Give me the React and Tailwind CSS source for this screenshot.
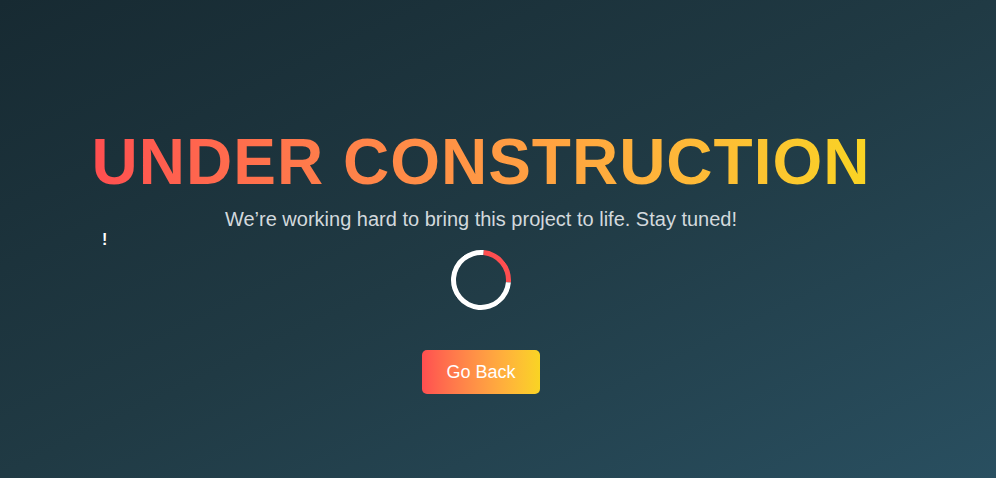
export default function App() {
  return (
    <div
      className="h-[478px] w-full overflow-hidden bg-gradient-to-br from-[#172a32] via-[#203a44] to-[#294f60]"
      style={{ fontFamily: '"Liberation Sans", Arial, sans-serif' }}
    >
      <div className="flex w-[962px] flex-col items-center pt-[130px]">
        {/* Title */}
        <h1 className="bg-gradient-to-r from-[#ff4e50] to-[#f9d423] bg-clip-text text-[64px] font-bold leading-none tracking-[1px] text-transparent">
          UNDER CONSTRUCTION
        </h1>

        {/* Subtitle */}
        <p className="mt-[13px] text-[20px] leading-[24px] text-[#d3d9dd]">
          We’re working hard to bring this project to life. Stay tuned!
        </p>

        <div className="mt-px w-full pl-[102px] text-[16px] font-bold leading-[16px] text-white">!</div>

        {/* Spinner */}
        <div className="mt-[2px] h-[60px] w-[60px] rotate-[50deg] rounded-full border-[5px] border-white border-t-[#ff4e50]" />

        {/* Button */}
        <button className="mt-[40px] rounded-[5px] bg-gradient-to-r from-[#ff4e50] to-[#f9d423] px-6 py-[10px] text-[18px] leading-[24px] text-white">
          Go Back
        </button>
      </div>
    </div>
  );
}
